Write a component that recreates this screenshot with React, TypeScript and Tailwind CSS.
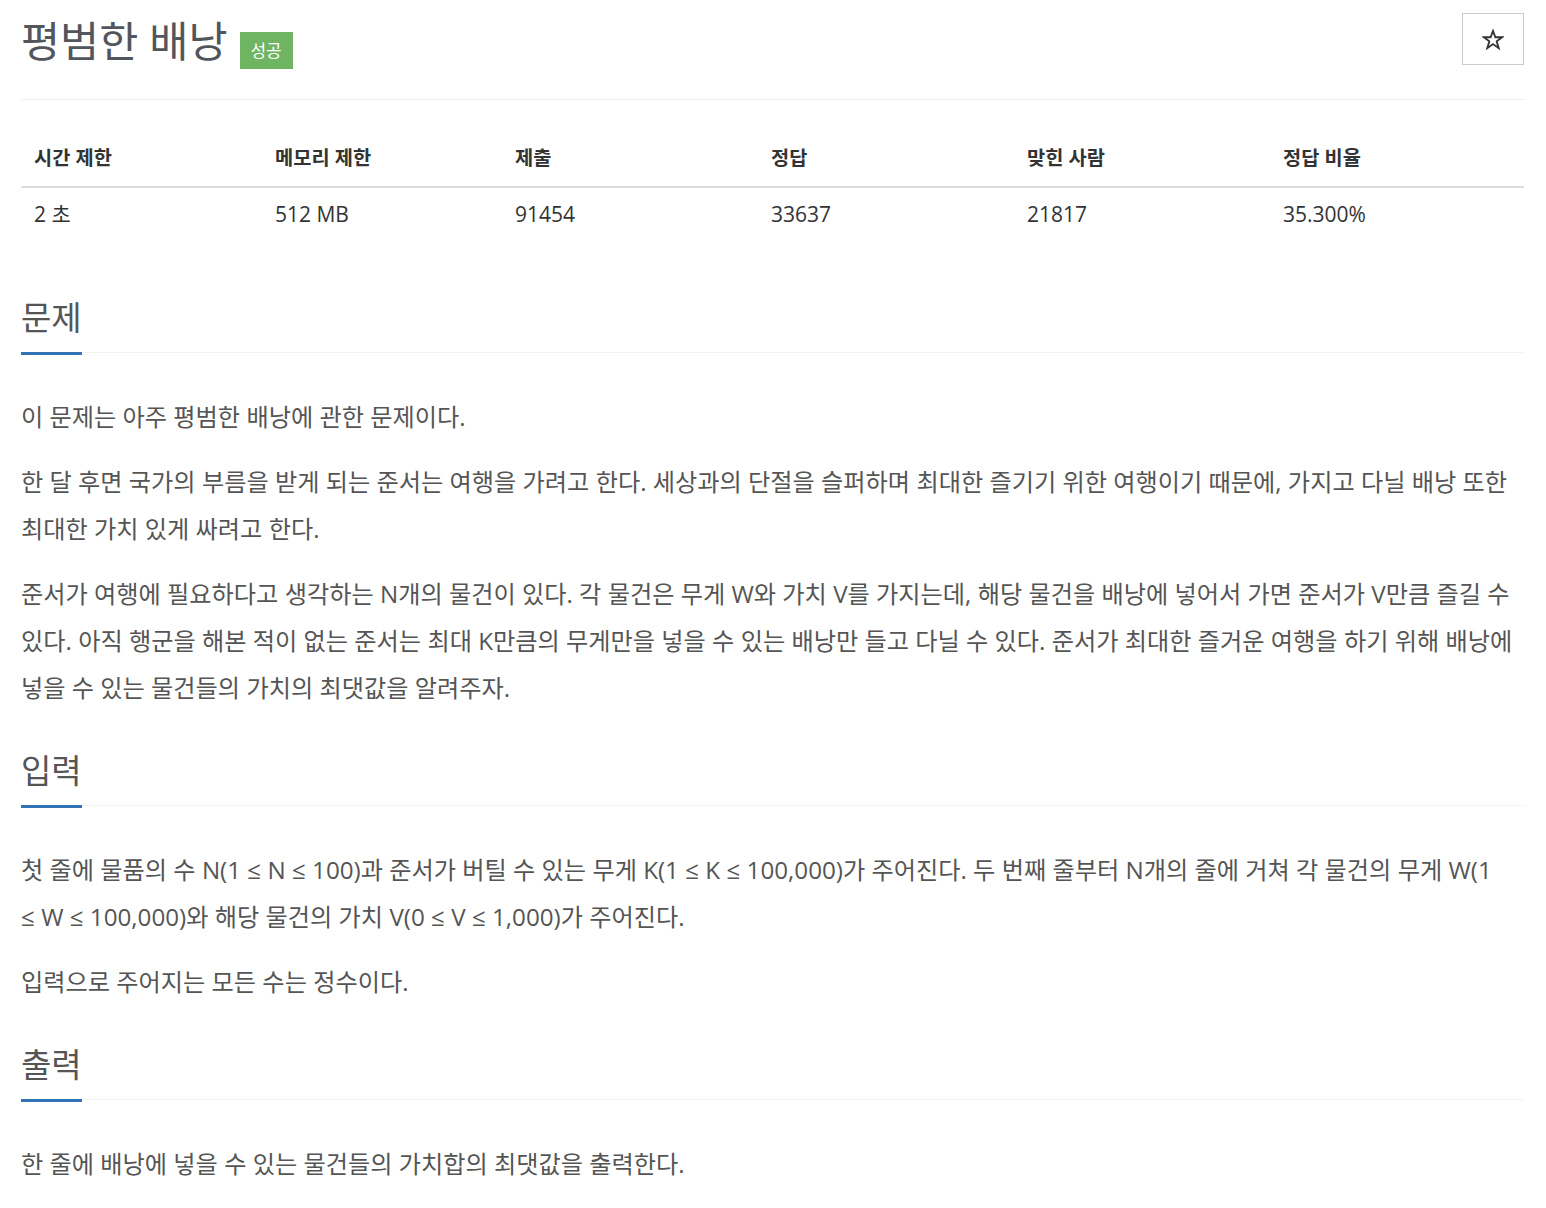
import React from 'react'

const stats = [
  { label: '시간 제한', value: '2 초' },
  { label: '메모리 제한', value: '512 MB' },
  { label: '제출', value: '91454' },
  { label: '정답', value: '33637' },
  { label: '맞힌 사람', value: '21817' },
  { label: '정답 비율', value: '35.300%' },
]

const font = { fontFamily: '"Open Sans", "Noto Sans CJK KR", sans-serif' }

function Headline({ title, first }: { title: string; first?: boolean }) {
  return (
    <div className={`flex border-b border-dotted border-[#e4e9f0] ${first ? '' : 'mt-[40px]'}`}>
      <h2 className="-mb-[3px] border-b-[3px] border-[#3273b8] pb-[14px] text-[33px] font-normal leading-[40px] text-[#555]">
        {title}
      </h2>
    </div>
  )
}

function Paragraph({ children }: { children: React.ReactNode }) {
  return <p className="mb-[18px] text-[24.2px] leading-[47px] text-[#555]">{children}</p>
}

export default function App() {
  return (
    <div className="min-h-screen bg-white px-[21px] pr-[22px]" style={font}>
      {/* Title */}
      <div className="flex items-start justify-between border-b border-[#eee] pb-[30px] pt-[13px]">
        <div className="flex items-end">
          <h1 className="text-[42.5px] font-normal leading-[56px] text-[#52565c]">평범한 배낭</h1>
          <span className="ml-[12px] flex h-[37px] w-[53px] items-center justify-center bg-[#6fb460] text-[17px] text-white">
            성공
          </span>
        </div>
        <button className="flex h-[52px] w-[62px] items-center justify-center border border-[#ccc] bg-white text-[#333]">
          <svg width="22" height="21" viewBox="0 0 24 23" fill="none" stroke="#333" strokeWidth="2" strokeLinejoin="miter">
            <path d="M12 2 L14.6 9 L22 9 L16 13.5 L18.3 21 L12 16.5 L5.7 21 L8 13.5 L2 9 L9.4 9 Z" />
          </svg>
        </button>
      </div>

      {/* Stats table */}
      <div className="mt-[30px]">
        <div className="grid grid-cols-[241px_240px_256px_256px_256px_1fr] border-b-2 border-[#ddd]">
          {stats.map((s) => (
            <div key={s.label} className="flex h-[56px] items-center px-[13px] text-[19.8px] font-bold text-[#333]">
              {s.label}
            </div>
          ))}
        </div>
        <div className="grid grid-cols-[241px_240px_256px_256px_256px_1fr]">
          {stats.map((s) => (
            <div key={s.label} className="flex h-[54px] items-center px-[13px] text-[21px] text-[#333]">
              {s.value}
            </div>
          ))}
        </div>
      </div>

      {/* 문제 */}
      <section className="mt-[56px]">
        <Headline title="문제" first />
        <div className="mt-[40px]">
          <Paragraph>이 문제는 아주 평범한 배낭에 관한 문제이다.</Paragraph>
          <Paragraph>
            한 달 후면 국가의 부름을 받게 되는 준서는 여행을 가려고 한다. 세상과의 단절을 슬퍼하며 최대한 즐기기 위한 여행이기 때문에, 가지고 다닐 배낭 또한 최대한 가치 있게 싸려고 한다.
          </Paragraph>
          <Paragraph>
            준서가 여행에 필요하다고 생각하는 N개의 물건이 있다. 각 물건은 무게 W와 가치 V를 가지는데, 해당 물건을 배낭에 넣어서 가면 준서가 V만큼 즐길 수 있다. 아직 행군을 해본 적이 없는 준서는 최대 K만큼의 무게만을 넣을 수 있는 배낭만 들고 다닐 수 있다. 준서가 최대한 즐거운 여행을 하기 위해 배낭에 넣을 수 있는 물건들의 가치의 최댓값을 알려주자.
          </Paragraph>
        </div>
      </section>

      {/* 입력 */}
      <section>
        <Headline title="입력" />
        <div className="mt-[40px]">
          <Paragraph>
            첫 줄에 물품의 수 N(1 ≤ N ≤ 100)과 준서가 버틸 수 있는 무게 K(1 ≤ K ≤ 100,000)가 주어진다. 두 번째 줄부터 N개의 줄에 거쳐 각 물건의 무게 W(1 ≤{'\u00a0'}W ≤ 100,000)와 해당 물건의 가치 V(0 ≤ V ≤ 1,000)가 주어진다.
          </Paragraph>
          <Paragraph>입력으로 주어지는 모든 수는 정수이다.</Paragraph>
        </div>
      </section>

      {/* 출력 */}
      <section>
        <Headline title="출력" />
        <div className="mt-[40px]">
          <Paragraph>한 줄에 배낭에 넣을 수 있는 물건들의 가치합의 최댓값을 출력한다.</Paragraph>
        </div>
      </section>
    </div>
  )
}
